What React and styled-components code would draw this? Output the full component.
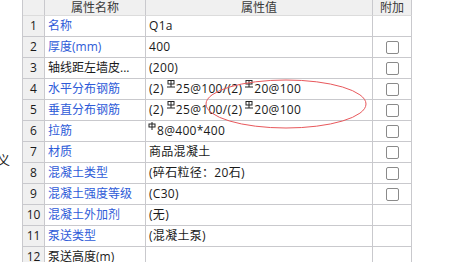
import React from "react";
import styled, { createGlobalStyle } from "styled-components";

const Global = createGlobalStyle`
  html, body {
    margin: 0;
    padding: 0;
    background: #fff;
  }
  body {
    width: 460px;
    height: 262px;
    overflow: hidden;
    font-family: "Open Sans", "Noto Sans CJK SC", sans-serif;
    font-size: 12px;
    color: #1a1a1a;
  }
`;

const Page = styled.div`
  display: flex;
  width: 460px;
  height: 262px;
  overflow: hidden;
`;

const Side = styled.div`
  width: 22px;
  flex: none;
  overflow: hidden;
  padding-top: 152px;
  box-sizing: border-box;
`;

const SideChar = styled.span`
  display: block;
  margin-left: -3px;
  font-size: 13px;
  line-height: 16px;
  color: #222;
`;

const Grid = styled.div`
  position: relative;
  flex: none;
  width: 390px;
  border-left: 1px solid #c9c9cd;
  box-sizing: border-box;
`;

const Row = styled.div`
  display: grid;
  grid-template-columns: 22px 101px 227px 39px;
  height: ${p => (p.$head ? 16 : 21)}px;
  background: ${p => (p.$head ? "#f0f0f0" : "#fff")};
`;

const Cell = styled.div`
  box-sizing: border-box;
  border-right: 1px solid #c9c9cd;
  border-bottom: 1px solid ${p => (p.$head ? "#dcdcdc" : "#c9c9cd")};
  display: flex;
  align-items: center;
  justify-content: ${p => (p.$center ? "center" : "flex-start")};
  padding-left: ${p => (p.$center ? 0 : p.$pad || 3)}px;
  white-space: nowrap;
  overflow: hidden;
  line-height: 14px;
  letter-spacing: ${p => (p.$value ? "0.3px" : "0")};
  color: ${p => (p.$blue ? "#2e5bd8" : p.$head ? "#3a3a3a" : "#1a1a1a")};
  background: ${p => (p.$num ? "#f0f0f0" : "transparent")};
`;

const Check = styled.span`
  width: 11px;
  height: 11px;
  border: 1px solid #8a8a8a;
  border-radius: 2px;
  background: #fff;
`;

const Sym = styled.svg`
  width: 8px;
  height: 8px;
  margin: 1px 1px 0 ${p => p.$gap}px;
  align-self: flex-start;
  flex: none;
`;

const Ring = styled.svg`
  position: absolute;
  left: 178px;
  top: 78px;
  width: 170px;
  height: 54px;
  pointer-events: none;
`;

const Bar3 = () => (
  <Sym viewBox="0 0 8 8" $gap={3}>
    <rect x="1" y="0.5" width="6" height="3.5" fill="none" stroke="#222" strokeWidth="1" />
    <line x1="4" y1="0" x2="4" y2="7" stroke="#222" strokeWidth="1" />
    <line x1="0" y1="7" x2="8" y2="7" stroke="#222" strokeWidth="1" />
  </Sym>
);

const Bar1 = () => (
  <Sym viewBox="0 0 8 8" $gap={1}>
    <rect x="1" y="2" width="6" height="3" fill="none" stroke="#222" strokeWidth="1" />
    <line x1="4" y1="0" x2="4" y2="8" stroke="#222" strokeWidth="1" />
  </Sym>
);

const Steel = ({ a, b }) => (
  <>
    (2)<Bar3 />
    {a}@100/(2)<Bar3 />
    {b}@100
  </>
);

const rows = [
  { n: 1, name: "名称", blue: true, value: "Q1a", check: false },
  { n: 2, name: "厚度(mm)", blue: true, value: "400", check: true },
  { n: 3, name: "轴线距左墙皮...", blue: false, value: "(200)", check: true },
  { n: 4, name: "水平分布钢筋", blue: true, value: <Steel a="25" b="20" />, check: true },
  { n: 5, name: "垂直分布钢筋", blue: true, value: <Steel a="25" b="20" />, check: true },
  {
    n: 6,
    name: "拉筋",
    blue: true,
    value: (
      <>
        <Bar1 />
        8@400*400
      </>
    ),
    check: true,
    pad: 1,
  },
  { n: 7, name: "材质", blue: true, value: "商品混凝土", check: true },
  { n: 8, name: "混凝土类型", blue: true, value: "(碎石粒径：20石)", check: true },
  { n: 9, name: "混凝土强度等级", blue: true, value: "(C30)", check: true },
  { n: 10, name: "混凝土外加剂", blue: true, value: "(无)", check: false },
  { n: 11, name: "泵送类型", blue: true, value: "(混凝土泵)", check: false },
  { n: 12, name: "泵送高度(m)", blue: false, value: "", check: false },
];

export default function App() {
  return (
    <>
      <Global />
      <Page>
        <Side>
          <SideChar>义</SideChar>
        </Side>
        <Grid>
          <Row $head>
            <Cell $head $center />
            <Cell $head $center>属性名称</Cell>
            <Cell $head $center>属性值</Cell>
            <Cell $head $center>附加</Cell>
          </Row>
          {rows.map(r => (
            <Row key={r.n}>
              <Cell $num $center>{r.n}</Cell>
              <Cell $blue={r.blue}>{r.name}</Cell>
              <Cell $value $pad={r.pad}>{r.value}</Cell>
              <Cell $center>{r.check && <Check />}</Cell>
            </Row>
          ))}
          <Ring viewBox="0 0 170 54">
            <ellipse cx="85" cy="26" rx="80" ry="24" fill="none" stroke="#e8585c" strokeWidth="1" />
          </Ring>
        </Grid>
      </Page>
    </>
  );
}
